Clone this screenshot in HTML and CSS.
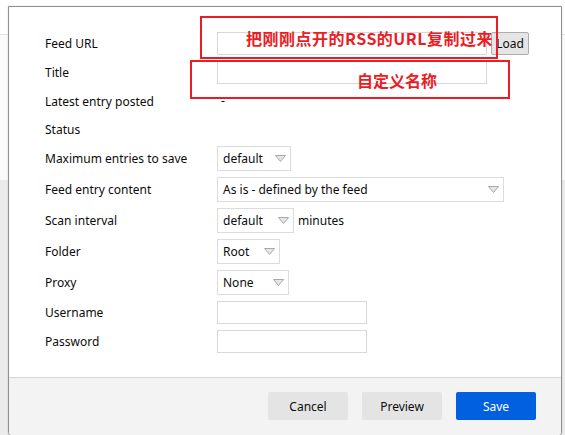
FILE: index.html
```html
<!DOCTYPE html>
<html>
<head>
<meta charset="utf-8">
<link rel="stylesheet" href="styles.css">
</head>
<body>
<div class="page">
  <div class="page-top"></div>
  <div class="page-mid"></div>
  <div class="page-rest"></div>
</div>
<div class="modal">
  <div class="content">
    <div class="form">
      <div class="label">Feed URL</div>
      <div class="ctrl"><div class="input w270"></div><button class="load">Load</button></div>
      <div class="label">Title</div>
      <div class="ctrl"><div class="input w270"></div></div>
      <div class="label">Latest entry posted</div>
      <div class="ctrl"><span class="dash">-</span></div>
      <div class="label">Status</div>
      <div class="ctrl short"></div>
      <div class="label">Maximum entries to save</div>
      <div class="ctrl"><div class="select w74"><span>default</span><svg class="arr" width="11" height="7" viewBox="0 0 11 7"><path d="M0.5 0.5 H10.5 L5.5 6.5 Z" fill="#e6e6e6" stroke="#a9a9a9"/></svg></div></div>
      <div class="label">Feed entry content</div>
      <div class="ctrl"><div class="select w287"><span>As is - defined by the feed</span><svg class="arr" width="11" height="7" viewBox="0 0 11 7"><path d="M0.5 0.5 H10.5 L5.5 6.5 Z" fill="#e6e6e6" stroke="#a9a9a9"/></svg></div></div>
      <div class="label">Scan interval</div>
      <div class="ctrl"><div class="select w77"><span>default</span><svg class="arr" width="11" height="7" viewBox="0 0 11 7"><path d="M0.5 0.5 H10.5 L5.5 6.5 Z" fill="#e6e6e6" stroke="#a9a9a9"/></svg></div><span class="unit">minutes</span></div>
      <div class="label">Folder</div>
      <div class="ctrl"><div class="select w63"><span>Root</span><svg class="arr" width="11" height="7" viewBox="0 0 11 7"><path d="M0.5 0.5 H10.5 L5.5 6.5 Z" fill="#e6e6e6" stroke="#a9a9a9"/></svg></div></div>
      <div class="label">Proxy</div>
      <div class="ctrl"><div class="select w72"><span>None</span><svg class="arr" width="11" height="7" viewBox="0 0 11 7"><path d="M0.5 0.5 H10.5 L5.5 6.5 Z" fill="#e6e6e6" stroke="#a9a9a9"/></svg></div></div>
      <div class="label">Username</div>
      <div class="ctrl"><div class="input w150"></div></div>
      <div class="label">Password</div>
      <div class="ctrl"><div class="input w150"></div></div>
    </div>
  </div>
  <div class="footer">
    <button class="btn">Cancel</button>
    <button class="btn">Preview</button>
    <button class="btn primary">Save</button>
  </div>
  <div class="note note1">把刚刚点开的RSS的URL复制过来</div>
  <div class="note note2">自定义名称</div>
</div>
</body>
</html>
```
FILE: styles.css
```css
html, body {
  margin: 0;
  padding: 0;
}
body {
  width: 565px;
  height: 435px;
  overflow: hidden;
  position: relative;
  font-family: "Noto Sans", "Open Sans", sans-serif;
  font-size: 12px;
  color: #0c0c0d;
}
.page {
  display: flex;
  flex-direction: column;
  height: 435px;
}
.page-top {
  height: 34px;
  background: #ffffff;
  border-bottom: 1px solid #e4e4e4;
}
.page-mid {
  height: 145px;
  background: #fafafa;
}
.page-rest {
  flex: 1;
  background: #ececec;
}
.modal {
  position: absolute;
  left: 8px;
  top: 6px;
  width: 552px;
  height: 428px;
  border: 1px solid #8f8f8f;
  border-radius: 0 0 4px 4px;
  background: #ffffff;
  display: flex;
  flex-direction: column;
  box-shadow: 0 0 2px rgba(0,0,0,0.15);
  overflow: hidden;
}
.content {
  flex: 1;
  padding: 25px 0 0 36px;
}
.form {
  display: grid;
  grid-template-columns: 172px 1fr;
  row-gap: 6px;
  align-items: center;
}
.label {
  line-height: 16px;
}
.ctrl {
  display: flex;
  align-items: center;
  gap: 4px;
  min-height: 23px;
}
.ctrl.short {
  min-height: 21px;
}
.input {
  height: 21px;
  border: 1px solid #d7d7db;
  background: #fff;
}
.w270 { width: 268px; }
.w150 { width: 148px; }
.load {
  font-family: "Noto Sans", sans-serif;
  font-size: 12px;
  height: 23px;
  width: 38px;
  padding: 0;
  border: 1px solid #adadad;
  border-radius: 2px;
  background: #e5e5e5;
  color: #0c0c0d;
}
.dash {
  padding-left: 4px;
  line-height: 14px;
  margin-bottom: 2px;
  color: #0c0c0d;
}
.select {
  border: 1px solid #dcdcdc;
  display: flex;
  align-items: center;
  justify-content: space-between;
  padding: 0 4px 0 5px;
  box-sizing: border-box;
  height: 25px;
}
.select span {
  line-height: 16px;
}
.arr {
  display: block;
}
.w74 { width: 74px; }
.w287 { width: 287px; }
.w77 { width: 77px; }
.w63 { width: 63px; }
.w72 { width: 72px; }
.footer {
  height: 58px;
  box-sizing: border-box;
  border-top: 1px solid #d7d7db;
  background: #f3f3f3;
  display: flex;
  justify-content: flex-end;
  align-items: flex-start;
  gap: 14px;
  padding: 14px 25px 0 0;
}
.btn {
  width: 80px;
  height: 28px;
  border: none;
  border-radius: 2px;
  background: #e4e4e4;
  font-family: "Noto Sans", sans-serif;
  font-size: 12px;
  color: #0c0c0d;
  padding: 0;
}
.btn.primary {
  background: #0060df;
  color: #ffffff;
}
.note {
  position: absolute;
  border: 2px solid #ec1c24;
  box-sizing: border-box;
  color: #ec1c24;
  font-family: "Noto Sans CJK SC", sans-serif;
  font-weight: bold;
  font-size: 16px;
  line-height: 20px;
  display: flex;
  align-items: center;
}
.note1 {
  left: 191px;
  top: 9px;
  width: 298px;
  height: 43px;
  justify-content: flex-end;
  padding-right: 3px;
  letter-spacing: 0.5px;
}
.note2 {
  left: 181px;
  top: 53px;
  width: 320px;
  height: 39px;
  padding-left: 165px;
}
```
